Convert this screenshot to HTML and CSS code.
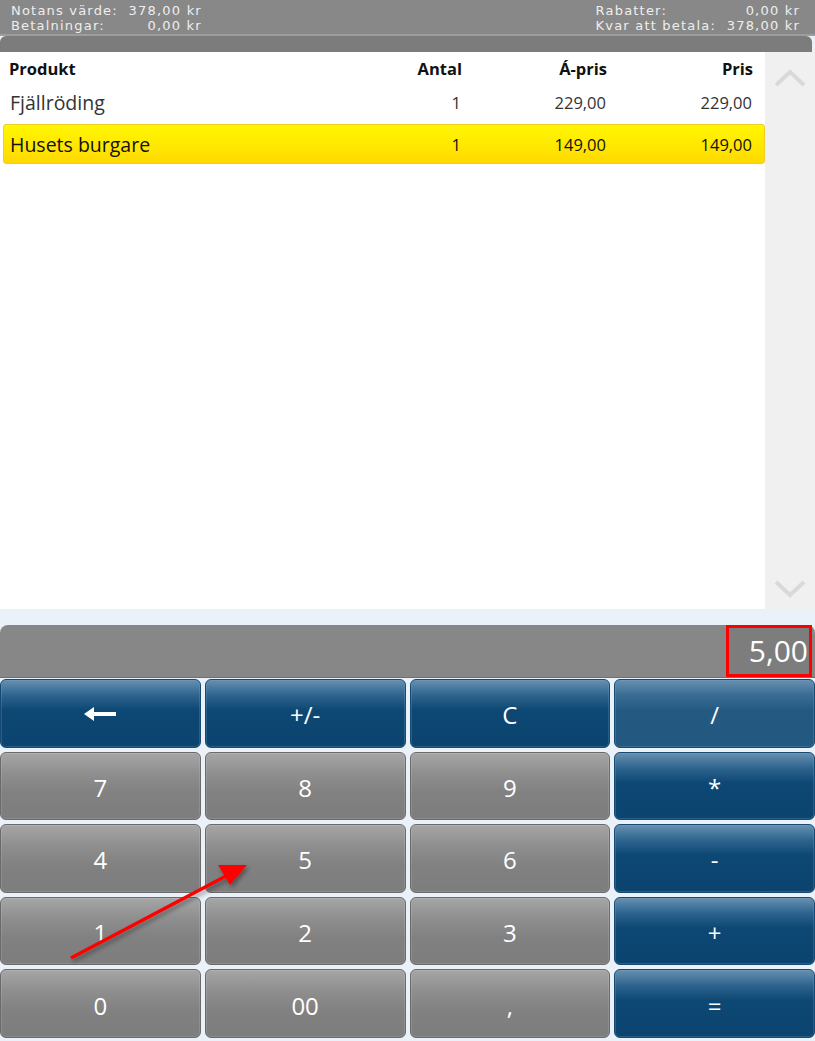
FILE: index.html
```html
<!DOCTYPE html>
<html lang="sv">
<head>
  <meta charset="UTF-8">
  <title>Kassa</title>
  <link rel="stylesheet" href="styles.css">
</head>
<body>

  <div class="summary">
    <div class="sum-block left">
      <span>Notans värde:</span><span class="val">378,00 kr</span>
      <span>Betalningar:</span><span class="val">0,00 kr</span>
    </div>
    <div class="sum-block right">
      <span>Rabatter:</span><span class="val">0,00 kr</span>
      <span>Kvar att betala:</span><span class="val">378,00 kr</span>
    </div>
  </div>
  <div class="strip"></div>

  <div class="main">
    <div class="list">
      <div class="row head">
        <span>Produkt</span><span class="num">Antal</span><span class="num">Á-pris</span><span class="num">Pris</span>
      </div>
      <div class="row item">
        <span class="name">Fjällröding</span><span class="num">1</span><span class="num">229,00</span><span class="num">229,00</span>
      </div>
      <div class="row item selected">
        <span class="name">Husets burgare</span><span class="num">1</span><span class="num">149,00</span><span class="num">149,00</span>
      </div>
    </div>
    <div class="scroll">
      <svg class="chev" width="34" height="20" viewBox="0 0 34 20"><path d="M3 17 L17 4 L31 17" fill="none" stroke="#d9d9d9" stroke-width="4"/></svg>
      <svg class="chev" width="34" height="20" viewBox="0 0 34 20"><path d="M3 3 L17 16 L31 3" fill="none" stroke="#d9d9d9" stroke-width="4"/></svg>
    </div>
  </div>

  <div class="pad">
    <div class="display">
      <div class="value">5,00</div>
    </div>
    <div class="keys">
      <button class="key blue" aria-label="Radera">
        <svg width="32" height="16" viewBox="0 0 32 16"><path d="M0 8 L10 1 L10 6 L32 6 L32 10 L10 10 L10 15 Z" fill="#fff"/></svg>
      </button>
      <button class="key blue">+/-</button>
      <button class="key blue">C</button>
      <button class="key blue light">/</button>

      <button class="key">7</button>
      <button class="key">8</button>
      <button class="key">9</button>
      <button class="key blue">*</button>

      <button class="key">4</button>
      <button class="key">5</button>
      <button class="key">6</button>
      <button class="key blue">-</button>

      <button class="key">1</button>
      <button class="key">2</button>
      <button class="key">3</button>
      <button class="key blue">+</button>

      <button class="key">0</button>
      <button class="key">00</button>
      <button class="key">,</button>
      <button class="key blue">=</button>
    </div>

    <!-- pil som pekar på knappen 5 -->
    <svg class="arrow" width="815" height="1041" viewBox="0 0 815 1041">
      <defs>
        <filter id="shade" x="-20%" y="-20%" width="140%" height="140%">
          <feDropShadow dx="2" dy="3" stdDeviation="2" flood-color="#000" flood-opacity="0.35"/>
        </filter>
      </defs>
      <g filter="url(#shade)">
        <line x1="71" y1="958" x2="226" y2="876" stroke="#ff0000" stroke-width="3.5"/>
        <polygon points="247,865 218,865 230,885" fill="#ff0000"/>
      </g>
    </svg>
  </div>

</body>
</html>
```

FILE: styles.css
```css
body {
  margin: 0;
  width: 815px;
  height: 1041px;
  overflow: hidden;
  position: relative;
  background: #eaf1f9;
  font-family: "Open Sans", "Noto Sans", sans-serif;
  color: #222;
}
.summary {
  height: 36px;
  background: #888;
  display: flex;
  justify-content: space-between;
  padding: 4px 15px 0 11px;
  box-sizing: border-box;
  border-bottom: 2px solid #9d9d9d;
  color: #eee;
  font-family: "DejaVu Sans", sans-serif;
  font-size: 13px;
  letter-spacing: 1.2px;
  line-height: 13px;
}
.sum-block {
  display: grid;
  column-gap: 4px;
}
.sum-block.left {
  grid-template-columns: auto 80px;
}
.sum-block.right {
  grid-template-columns: auto 80px;
}
.sum-block .val {
  text-align: right;
}
.strip {
  height: 16px;
  width: 812px;
  background: #7c7c7c;
  border-radius: 6px 6px 0 0;
}
.main {
  display: flex;
  height: 557px;
  background: #fff;
}
.list {
  flex: 1;
  padding: 4px 0 0 3px;
}
.row {
  display: grid;
  grid-template-columns: 1fr 100px 145px 146px;
  align-items: center;
  padding: 0 12px 0 6px;
}
.row .num {
  text-align: right;
}
.head {
  height: 24px;
  font-weight: bold;
  font-size: 16.5px;
  color: #111;
}
.item {
  height: 38px;
  font-size: 16.5px;
  border: 1px solid transparent;
  border-radius: 3px;
  margin-top: 2px;
  color: #333;
}
.item .name {
  font-size: 19.5px;
}
.selected {
  background: linear-gradient(#fff700, #ffe600 60%, #ffd900);
  border-color: #f0cf20;
  color: #111;
}
.scroll {
  width: 50px;
  background: #f0f0f0;
  display: flex;
  flex-direction: column;
  justify-content: space-between;
  align-items: center;
  padding: 16px 0 10px;
}
.pad {
  padding-top: 16px;
}
.display {
  height: 52px;
  background: #878787;
  border-radius: 8px 8px 0 0;
  border-bottom: 1px solid #6f6f6f;
  display: flex;
  justify-content: flex-end;
  padding-right: 3px;
}
.value {
  width: 86px;
  height: 100%;
  box-sizing: border-box;
  border: 3px solid #ff0000;
  background: #7d7d7d;
  color: #fff;
  font-size: 30px;
  text-align: right;
  padding-right: 1px;
  line-height: 45px;
}
.keys {
  display: grid;
  grid-template-columns: repeat(4, 1fr);
  grid-template-rows: repeat(5, 1fr);
  gap: 4px;
  height: 359px;
  margin-top: 1px;
}
.key {
  font-family: "Open Sans", "Noto Sans", sans-serif;
  font-size: 24px;
  color: #fff;
  border: 1px solid #6a6a6a;
  border-radius: 6px;
  background: linear-gradient(#a6a6a6 0%, #8f8f8f 30%, #818181 60%, #7d7d7d 100%);
  box-shadow: inset 0 0 0 1px rgba(255, 255, 255, 0.12);
  padding: 3px 0 0;
}
.key svg {
  display: block;
  margin: -1px auto 0;
}
.key.blue {
  border-color: #174a72;
  background: linear-gradient(#6890b0 0%, #2f6690 22%, #0d4773 45%, #0b446f 100%);
  box-shadow: inset 0 0 0 1px rgba(120, 170, 210, 0.25);
}
.key.light {
  background: linear-gradient(#6890b0 0%, #3a6d94 22%, #245a82 45%, #235880 100%);
}
.arrow {
  position: absolute;
  left: 0;
  top: 0;
  pointer-events: none;
}
```
